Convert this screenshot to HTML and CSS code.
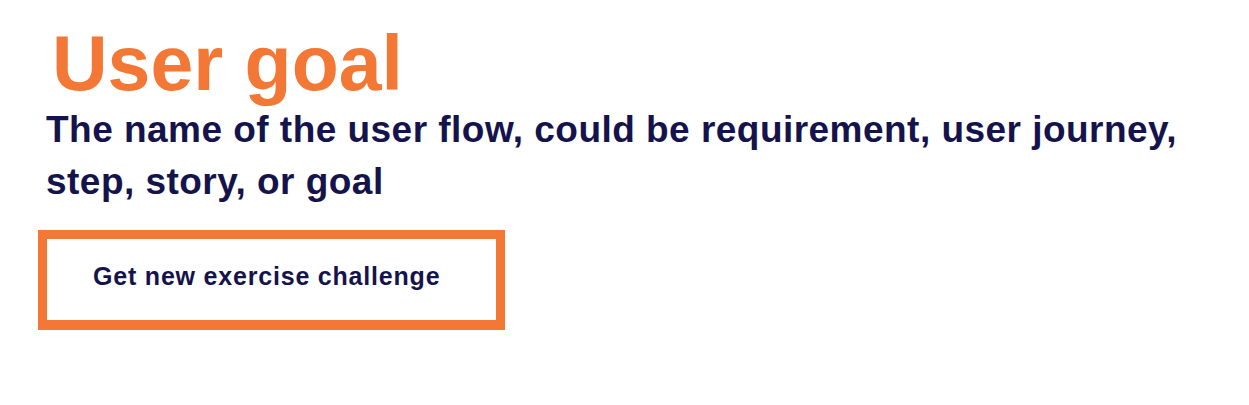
FILE: index.html
```html
<!DOCTYPE html>
<html lang="en">
<head>
<meta charset="utf-8">
<title>User goal</title>
<link rel="stylesheet" href="styles.css">
</head>
<body>
<main class="card">
  <h1 class="title">User goal</h1>
  <p class="subtitle">The name of the user flow, could be requirement, user journey, step, story, or goal</p>
  <div class="step">Get new exercise challenge</div>
</main>
</body>
</html>
```
FILE: styles.css
```css
html, body {
  margin: 0;
  padding: 0;
  background: #ffffff;
}
body {
  font-family: "Liberation Sans", Arial, sans-serif;
}
.card {
  padding: 25px 0 0 38px;
  display: flex;
  flex-direction: column;
  align-items: flex-start;
}
.title {
  margin: 0 0 0 14px;
  font-size: 77px;
  line-height: 77px;
  font-weight: 700;
  color: #f37735;
}
.subtitle {
  margin: 2px 0 0 8px;
  font-size: 37px;
  line-height: 52px;
  letter-spacing: 0.47px;
  font-weight: 700;
  color: #15134b;
  max-width: 1180px;
}
.step {
  margin-top: 22px;
  box-sizing: border-box;
  width: 467px;
  height: 100px;
  border: 9px solid #f37735;
  border-bottom-width: 10px;
  display: flex;
  align-items: center;
  padding: 0 0 6px 46px;
  font-size: 25px;
  letter-spacing: 0.8px;
  font-weight: 700;
  color: #15134b;
}
```
